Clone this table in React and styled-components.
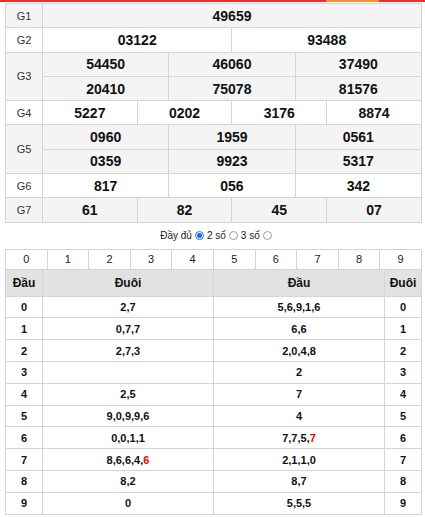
import React from "react";
import styled, { createGlobalStyle } from "styled-components";

const Global = createGlobalStyle`
  html, body { margin: 0; padding: 0; background: #fff; }
  body { font-family: "Liberation Sans", Arial, sans-serif; color: #000; }
`;

const Page = styled.div`
  width: 425px;
`;

const TopBar = styled.div`
  display: flex;
  height: 2px;
  margin-bottom: 1px;
`;

const Seg = styled.div`
  background: ${(p) => p.$color};
  width: ${(p) => (p.$w ? `${p.$w}px` : "auto")};
  flex: ${(p) => (p.$w ? "0 0 auto" : "1")};
`;

const Wrap = styled.div`
  padding: 0 3px 0 5px;
`;

const Table = styled.table`
  width: 417px;
  border-collapse: collapse;
  table-layout: fixed;
`;

const Row = styled.tr`
  background: ${(p) => (p.$gray ? "#f4f4f4" : "#fff")};
`;

const Label = styled.td`
  width: 37px;
  border: 1px solid #d5d5d5;
  font-size: 11px;
  color: #333;
  text-align: center;
  padding: 0;
`;

const Num = styled.td`
  border: 1px solid #d5d5d5;
  height: 23.3px;
  padding: 0;
  text-align: center;
  font-size: 14px;
  font-weight: bold;
  color: #111;
`;

const ModeBar = styled.div`
  display: flex;
  justify-content: center;
  align-items: center;
  gap: 2px;
  height: 26px;
  font-size: 10px;
  color: #222;
  padding-left: 6px;
`;

const Radio = styled.span`
  display: inline-block;
  box-sizing: border-box;
  width: 9px;
  height: 9px;
  border-radius: 50%;
  margin: 0 1px;
  border: 1px solid ${(p) => (p.$on ? "#1a73e8" : "#9a9a9a")};
  background: ${(p) =>
    p.$on ? "radial-gradient(circle, #1a73e8 0 2.2px, #fff 2.6px)" : "#fff"};
`;

const DigitCell = styled.td`
  border: 1px solid #d5d5d5;
  height: 19px;
  padding: 0;
  text-align: center;
  font-size: 11px;
  color: #222;
`;

const HeadCell = styled.td`
  border: 1px solid #d5d5d5;
  border-top: 0;
  background: #e2e2e2;
  height: 26px;
  padding: 0;
  text-align: center;
  font-size: 12px;
  font-weight: bold;
  color: #111;
  width: ${(p) => (p.$narrow ? "37px" : "auto")};
`;

const LotoCell = styled.td`
  border: 1px solid #d5d5d5;
  height: 20.8px;
  padding: 0;
  text-align: center;
  font-size: 11px;
  font-weight: bold;
  color: #111;
`;

const Hot = styled.span`
  color: #e00;
`;

const results = [
  { g: "G1", rows: [["49659"]], gray: true },
  { g: "G2", rows: [["03122", "93488"]] },
  { g: "G3", rows: [["54450", "46060", "37490"], ["20410", "75078", "81576"]], gray: true },
  { g: "G4", rows: [["5227", "0202", "3176", "8874"]] },
  { g: "G5", rows: [["0960", "1959", "0561"], ["0359", "9923", "5317"]], gray: true },
  { g: "G6", rows: [["817", "056", "342"]] },
  { g: "G7", rows: [["61", "82", "45", "07"]], gray: true },
];

const loto = [
  ["0", ["2,7"], ["5,6,9,1,6"]],
  ["1", ["0,7,7"], ["6,6"]],
  ["2", ["2,7,3"], ["2,0,4,8"]],
  ["3", [""], ["2"]],
  ["4", ["2,5"], ["7"]],
  ["5", ["9,0,9,9,6"], ["4"]],
  ["6", ["0,0,1,1"], ["7,7,5,", "7"]],
  ["7", ["8,6,6,4,", "6"], ["2,1,1,0"]],
  ["8", ["8,2"], ["8,7"]],
  ["9", ["0"], ["5,5,5"]],
];

const Parts = ({ p }) => (
  <>
    {p[0]}
    {p[1] && <Hot>{p[1]}</Hot>}
  </>
);

export default function App() {
  return (
    <Page>
      <Global />
      <TopBar>
        <Seg $color="#ee2a2e" $w={326} />
        <Seg $color="#f7923a" $w={53} />
        <Seg $color="#ee2a2e" />
      </TopBar>
      <Wrap>
        <Table>
          <colgroup>
            <col style={{ width: 37 }} />
            {Array.from({ length: 12 }).map((_, i) => (
              <col key={i} />
            ))}
          </colgroup>
          <tbody>
            {results.map((r) =>
              r.rows.map((cells, ri) => (
                <Row key={r.g + ri} $gray={r.gray}>
                  {ri === 0 && <Label rowSpan={r.rows.length}>{r.g}</Label>}
                  {cells.map((c, ci) => (
                    <Num key={ci} colSpan={12 / cells.length}>
                      {c}
                    </Num>
                  ))}
                </Row>
              ))
            )}
          </tbody>
        </Table>

        <ModeBar>
          <span>Đầy đủ</span>
          <Radio $on />
          <span>2 số</span>
          <Radio />
          <span>3 số</span>
          <Radio />
        </ModeBar>

        <Table>
          <tbody>
            <tr>
              {Array.from({ length: 10 }).map((_, i) => (
                <DigitCell key={i}>{i}</DigitCell>
              ))}
            </tr>
          </tbody>
        </Table>
        <Table>
          <colgroup>
            <col style={{ width: 37 }} />
            <col />
            <col />
            <col style={{ width: 37 }} />
          </colgroup>
          <tbody>
            <tr>
              <HeadCell $narrow>Đầu</HeadCell>
              <HeadCell>Đuôi</HeadCell>
              <HeadCell>Đầu</HeadCell>
              <HeadCell $narrow>Đuôi</HeadCell>
            </tr>
            {loto.map(([d, tail, head]) => (
              <tr key={d}>
                <LotoCell>{d}</LotoCell>
                <LotoCell>
                  <Parts p={tail} />
                </LotoCell>
                <LotoCell>
                  <Parts p={head} />
                </LotoCell>
                <LotoCell>{d}</LotoCell>
              </tr>
            ))}
          </tbody>
        </Table>
      </Wrap>
    </Page>
  );
}
